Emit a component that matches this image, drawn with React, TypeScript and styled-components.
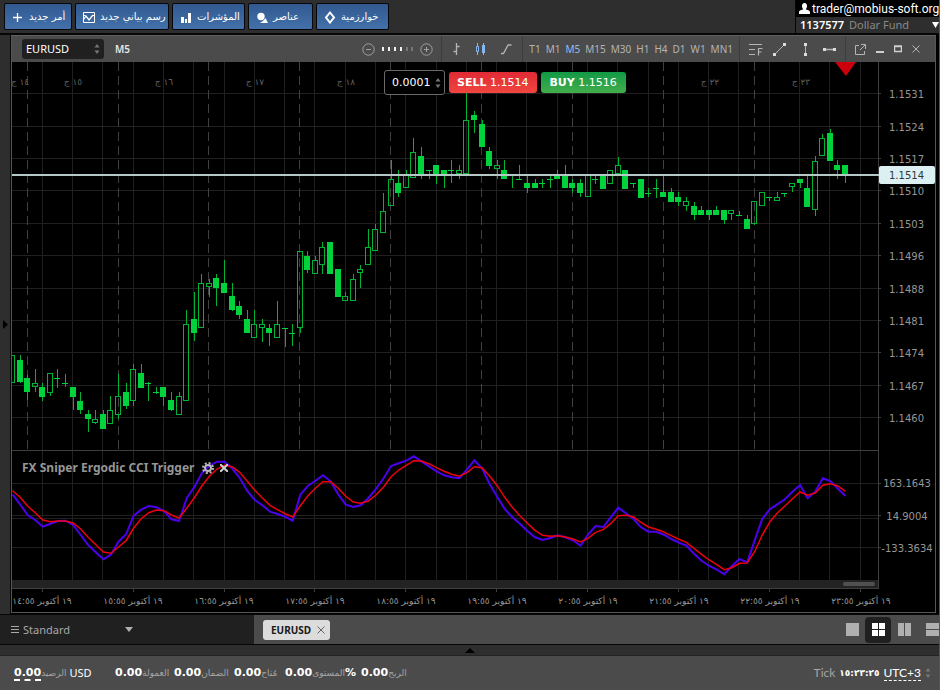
import React from "react";
import styled, { createGlobalStyle, css } from "styled-components";

const GlobalStyle = createGlobalStyle`
  *, *::before, *::after { box-sizing: border-box; }
  html, body, #root { height: 100%; }
  body {
    margin: 0;
    background: #2e2e2e;
    color: #fff;
    font: 11px/16px "Noto Sans", "DejaVu Sans", sans-serif;
    overflow: hidden;
  }
  button, input, select { font: inherit; color: inherit; margin: 0; }
  button { cursor: pointer; padding: 0; border: 0; background: none; }
`;

const Page = styled.div`
  display: flex;
  flex-direction: column;
  height: 100%;
  border-right: 1px solid #2a5f86;
`;

const Header = styled.header`
  display: flex;
  justify-content: space-between;
  height: 35px;
  flex: none;
  background: #2e2e2e;
  border-bottom: 2px solid #060606;
`;

const Commands = styled.nav`
  display: flex;
  gap: 3px;
  padding: 3px 0 0 4px;
`;

const CommandButton = styled.button<{ $width: number }>`
  display: flex;
  align-items: center;
  justify-content: flex-start;
  gap: 4px;
  width: ${(p) => p.$width}px;
  height: 27px;
  padding: 0 6px;
  border: 1px solid #05070a;
  border-radius: 2px;
  background: linear-gradient(#30598f, #4471ab);
  color: #fff;
  font: 10px/16px "DejaVu Sans", sans-serif;
  white-space: nowrap;
  svg { flex: none; }
`;

const Account = styled.section`
  width: 144px;
  border-left: 1px solid #060606;
`;

const AccountUser = styled.div`
  display: flex;
  align-items: center;
  gap: 2px;
  height: 17px;
  padding-left: 3px;
  background: #000;
  font: 12px/16px Roboto, sans-serif;
  white-space: nowrap;
  svg { flex: none; }
`;

const AccountNumber = styled.div`
  display: flex;
  align-items: center;
  gap: 5px;
  height: 15px;
  padding-left: 4px;
  color: #8a8a8a;
  b { color: #fff; font-weight: 600; }
  svg { margin-left: auto; }
`;

const Workspace = styled.main`
  display: flex;
  flex: 1;
  min-height: 0;
  background: #000;
`;

const SideHandle = styled.button`
  width: 11px;
  flex: none;
  background: #2e2e2e;
  border-right: 1px solid #060606;
  display: flex;
  align-items: center;
  justify-content: flex-start;
  padding-left: 3px;
`;

const ChartWindow = styled.section`
  display: flex;
  flex-direction: column;
  flex: 1;
  min-width: 0;
  border: 1px solid #565656;
  border-top-color: #606060;
  margin: 0 3px 1px 0;
`;

const ChartToolbar = styled.div`
  display: flex;
  align-items: center;
  height: 26px;
  flex: none;
  padding-left: 10px;
  background: #4b4b4b;
  color: #b4b4b4;
`;

const Spinner = styled.span`
  display: inline-flex;
  pointer-events: none;
`;

const SymbolField = styled.label`
  display: flex;
  align-items: center;
  width: 82px;
  height: 20px;
  padding: 0 4px;
  border-radius: 3px;
  background: #202020;
  color: #fff;
`;

const SymbolSelect = styled.select`
  appearance: none;
  flex: 1;
  min-width: 0;
  border: 0;
  padding: 0;
  background: transparent;
  color: #fff;
  outline: 0;
`;

const ActivePeriod = styled.span`
  margin-left: 11px;
  color: #e6e6e6;
  font-size: 10px;
  font-weight: 600;
`;

const ToolGroup = styled.div<{ $gap: number; $pad: number; $end?: number; $push?: boolean }>`
  display: flex;
  align-items: center;
  height: 26px;
  gap: ${(p) => p.$gap}px;
  padding: 0 ${(p) => p.$end ?? p.$pad}px 0 ${(p) => p.$pad}px;
  ${(p) => p.$push && css`margin-left: auto;`}
  & + & { border-left: 1px solid #3c3c3c; }
`;

const IconButton = styled.button`
  display: inline-flex;
  align-items: center;
  justify-content: center;
  color: inherit;
`;

const PeriodButton = styled.button<{ $active?: boolean }>`
  font-size: 10px;
  color: ${(p) => (p.$active ? "#8fbdf2" : "#b4b4b4")};
`;

const ChartBody = styled.div`
  position: relative;
  flex: 1;
  min-height: 0;
  background: #000;
`;

const ChartSvg = styled.svg`
  display: block;
  width: 100%;
  height: 100%;
  font-family: "DejaVu Sans", sans-serif;
`;

const ChartOverlay = styled.div`
  position: absolute;
  inset: 0;
  display: grid;
  grid-template-rows: 388fr 162fr;
`;

const TradePanel = styled.div`
  display: flex;
  align-items: center;
  align-self: start;
  gap: 4px;
  margin-left: 372px;
  padding-top: 8px;
  font: 11px/16px "DejaVu Sans", sans-serif;
`;

const VolumeField = styled.label`
  display: flex;
  align-items: center;
  width: 61px;
  height: 25px;
  padding: 0 3px 0 7px;
  border: 1px solid #6a6a6a;
  border-radius: 3px;
  background: #000;
`;

const VolumeInput = styled.input`
  flex: 1;
  width: 40px;
  min-width: 0;
  padding: 0;
  border: 0;
  outline: 0;
  background: transparent;
`;

const TradeButton = styled.button<{ $side: "sell" | "buy" }>`
  height: 21px;
  padding: 0 9px 0 8px;
  border-radius: 3px;
  white-space: nowrap;
  background: ${(p) =>
    p.$side === "sell" ? "linear-gradient(#e02a35, #f04540)" : "linear-gradient(#129a45, #42ad4c)"};
`;

const IndicatorTitle = styled.div`
  display: flex;
  align-items: center;
  align-self: start;
  gap: 6px;
  padding: 10px 0 0 10px;
  color: #969696;
  font: bold 12px/16px "Noto Sans", sans-serif;
  span { margin-right: 2px; }
`;

const TabBar = styled.footer`
  display: flex;
  align-items: stretch;
  height: 31px;
  flex: none;
  background: #4b4b4b;
  border-top: 1px solid #060606;
  border-bottom: 1px solid #060606;
`;

const LayoutPicker = styled.button`
  display: flex;
  align-items: center;
  gap: 4px;
  width: 254px;
  padding: 0 0 0 11px;
  background: #202020;
  color: #a8a8a8;
  text-align: left;
  span { width: 98px; }
`;

const ChartTab = styled.div`
  display: flex;
  align-items: center;
  align-self: center;
  gap: 6px;
  height: 20px;
  margin-left: 9px;
  padding: 0 5px 0 8px;
  border-radius: 3px;
  background: #dcdcdc;
  color: #181818;
  font-size: 10px;
  font-weight: 700;
`;

const TileButtons = styled.div`
  display: flex;
  align-items: center;
  margin-left: auto;
`;

const TileButton = styled.button<{ $active?: boolean }>`
  display: flex;
  align-items: center;
  justify-content: center;
  width: 26px;
  height: 26px;
  border-radius: 4px;
  color: ${(p) => (p.$active ? "#fff" : "#b0b0b0")};
  background: ${(p) => (p.$active ? "#202020" : "transparent")};
  &:last-child { width: 22px; justify-content: flex-end; }
`;

const Drawer = styled.button`
  display: flex;
  align-items: center;
  justify-content: center;
  height: 10px;
  flex: none;
  background: #2e2e2e;
`;

const StatusBar = styled.footer`
  display: flex;
  align-items: center;
  height: 35px;
  flex: none;
  padding: 0 8px 0 14px;
  border-top: 1px solid #222;
  background: #4b4b4b;
  white-space: nowrap;
`;

const Metric = styled.div<{ $width: number }>`
  display: flex;
  align-items: center;
  width: ${(p) => p.$width}px;
  b { font: bold 11px/16px "DejaVu Sans", sans-serif; }
  bdi { color: #a5a5a5; font: 9px/16px "DejaVu Sans", sans-serif; }
`;

const Dashed = styled.span`
  border-bottom: 2px dashed #fff;
  line-height: 12px;
  b { line-height: 12px; }
`;

const Currency = styled.span`
  margin-left: 3px;
`;

const Clock = styled.div`
  display: flex;
  align-items: center;
  gap: 4px;
  margin-left: auto;
  color: #a5a5a5;
  font: 12px/14px Lato, sans-serif;
  b { color: #fff; font: bold 9px/14px "DejaVu Sans", sans-serif; }
`;

const ZoneButton = styled.button`
  border-bottom: 1px dashed #fff;
  color: #fff;
`;

/* ---------- icons ---------- */

const UpDown = () => (
  <Spinner aria-hidden="true">
    <svg width="6" height="12" viewBox="0 0 6 12" fill="#777">
      <path d="M3 1l2.500 3.500h-5zM3 11L.5 7.500h5z" />
    </svg>
  </Spinner>
);

const commandIcons: Record<string, React.ReactNode> = {
  plus: <path d="M6.500 3v9M2 7.500h9" stroke="#fff" strokeWidth="1.300" />,
  chart: (
    <g fill="none" stroke="#fff">
      <path d="M1.500 2.500h11v10h-11zM1.500 5.500h2M10.500 5.500h2" strokeWidth="1" />
      <path d="M2 9l2-3 3 4 4-5" strokeWidth="1.300" />
    </g>
  ),
  bars: <path d="M2 7h3v6H2zM6 9h2v4H6zM9 3h3v10H9z" fill="#fff" />,
  shapes: (
    <g fill="#fff">
      <circle cx="6" cy="6.500" r="3.700" />
      <path d="M5 13h8l-2.500-5L8 11z" />
    </g>
  ),
  diamond: <path d="M7 2.500l4 5L7 12.500 3 7.500z" fill="none" stroke="#fff" strokeWidth="2" />,
};

const Minus = () => (
  <svg width="13" height="13" viewBox="0 0 13 13" fill="none" stroke="#a0a0a0">
    <circle cx="6.500" cy="6.500" r="5.700" />
    <path d="M4 6.500h5" />
  </svg>
);
const Plus = () => (
  <svg width="13" height="13" viewBox="0 0 13 13" fill="none" stroke="#a0a0a0">
    <circle cx="6.500" cy="6.500" r="5.700" />
    <path d="M4 6.500h5M6.500 4v5" />
  </svg>
);
const ScaleDots = () => (
  <svg width="31" height="4" viewBox="0 0 31 4" fill="#f0f0f0">
    {[0, 6, 12, 18].map((x) => (
      <rect key={x} x={x} width="2" height="4" />
    ))}
    <rect x="24" width="2" height="4" fill="#777" />
    <rect x="29" width="2" height="4" fill="#777" />
  </svg>
);

const toolIcon = (label: string, w: number, h: number, node: React.ReactNode) => (
  <IconButton key={label} aria-label={label}>
    <svg width={w} height={h} viewBox={`0 0 ${w} ${h}`} fill="none" stroke="currentColor">
      {node}
    </svg>
  </IconButton>
);

const chartTypes = [
  toolIcon("Bars", 9, 14, <path d="M4.500 1v12M4.500 4.500h3M1.500 9.500h3" strokeWidth="1.300" />),
  toolIcon(
    "Candles",
    11,
    14,
    <g stroke="#86b8f2" fill="none">
      <path d="M2.500 1v3M2.500 10v3M8.500 1v12" />
      <path d="M1.500 4.500h2v5h-2z" />
      <path d="M7 3h3v8H7z" fill="#86b8f2" stroke="none" />
    </g>
  ),
  toolIcon("Line", 12, 14, <path d="M1 11.500h2.500L8 3h3.500" strokeWidth="1.400" strokeLinejoin="round" />),
];

const drawingTools = [
  toolIcon(
    "Fibonacci",
    14,
    13,
    <path d="M0 1.500h13M0 6.500h6M0 11.500h6M9.500 12.500v-7h4M9.500 9h3" strokeWidth="1.200" />
  ),
  toolIcon(
    "Trend line",
    13,
    13,
    <g>
      <path d="M2 11l9-9" />
      <path d="M0 10h3v3H0zM10 0h3v3h-3z" fill="#dcdcdc" stroke="none" />
    </g>
  ),
  toolIcon(
    "Vertical line",
    17,
    13,
    <g>
      <path d="M9.500 1v11" />
      <path d="M8 0h3v3H8zM8 10h3v3H8z" fill="#dcdcdc" stroke="none" />
    </g>
  ),
  toolIcon(
    "Horizontal line",
    13,
    5,
    <g>
      <path d="M1 2.500h11" strokeWidth="1.500" />
      <path d="M0 1h3v3H0zM10 1h3v3h-3z" fill="#dcdcdc" stroke="none" />
    </g>
  ),
];

const windowTools = [
  toolIcon("Detach", 11, 11, <path d="M4 1.500H.5v9h9V7M6 .5h4.500V5M10 1L5 6" />),
  toolIcon("Minimize", 8, 12, <path d="M0 9h8" strokeWidth="2" stroke="#d0d0d0" />),
  toolIcon("Maximize", 8, 8, <path d="M.5 1.500h7v5h-7zM0 1h8" stroke="#d0d0d0" strokeWidth="1.500" />),
  toolIcon("Close", 8, 8, <path d="M.5.5l7 7M7.500.5l-7 7" />),
];

/* ---------- chart data: [high, bodyTop, bodyBottom, low, filled] ---------- */

type Candle = [number, number, number, number, 0 | 1];

const CANDLES: Candle[] = [
  [355, 355, 383, 383, 0], [355, 360, 382, 383, 1], [375, 378, 392, 400, 1], [369, 383, 387, 392, 0],
  [383, 387, 397, 401, 1], [373, 373, 393, 396, 0], [369, 378, 379, 388, 1], [374, 383, 384, 387, 1],
  [387, 387, 397, 410, 1], [392, 401, 410, 414, 1], [410, 414, 419, 432, 1], [410, 419, 423, 424, 0],
  [410, 414, 429, 429, 1], [396, 410, 424, 424, 0], [374, 396, 415, 419, 0], [383, 392, 406, 409, 1],
  [364, 369, 401, 406, 0], [364, 373, 388, 388, 1], [382, 383, 384, 401, 1], [387, 392, 393, 394, 1],
  [387, 387, 397, 406, 1], [392, 400, 410, 411, 1], [392, 396, 415, 415, 0], [310, 324, 401, 401, 0],
  [292, 319, 333, 341, 1], [274, 283, 328, 328, 0], [279, 283, 287, 297, 0], [274, 278, 288, 306, 1],
  [260, 283, 293, 293, 1], [283, 296, 310, 311, 1], [301, 306, 315, 319, 1], [310, 319, 333, 333, 1],
  [310, 324, 338, 338, 0], [319, 324, 328, 342, 0], [324, 328, 333, 346, 1], [301, 324, 338, 338, 0],
  [328, 328, 329, 347, 1], [324, 333, 334, 346, 1], [251, 251, 328, 333, 0], [251, 256, 270, 273, 1],
  [256, 260, 274, 274, 0], [242, 247, 265, 274, 0], [242, 242, 274, 274, 1], [269, 269, 297, 297, 1],
  [292, 296, 301, 301, 0], [274, 279, 301, 301, 0], [265, 269, 273, 288, 0], [229, 247, 265, 265, 0],
  [224, 229, 251, 251, 0], [193, 211, 233, 233, 0], [160, 179, 206, 206, 0], [170, 183, 193, 197, 1],
  [170, 175, 188, 188, 0], [138, 152, 178, 178, 0], [147, 156, 174, 179, 1], [170, 170, 171, 179, 1],
  [165, 165, 174, 184, 1], [170, 170, 174, 188, 1], [160, 170, 171, 183, 1], [165, 170, 174, 179, 0],
  [92, 120, 174, 174, 0], [111, 115, 120, 133, 1], [120, 124, 147, 147, 1], [147, 151, 166, 169, 1],
  [160, 165, 169, 179, 0], [160, 170, 179, 179, 1], [174, 174, 175, 188, 1], [165, 179, 180, 180, 1],
  [175, 183, 188, 193, 1], [179, 183, 188, 188, 1], [179, 183, 184, 188, 1], [175, 179, 180, 188, 1],
  [170, 175, 179, 179, 1], [165, 175, 188, 188, 1], [179, 183, 188, 193, 1], [179, 183, 193, 197, 1],
  [175, 175, 197, 197, 0], [175, 179, 180, 184, 1], [174, 174, 189, 189, 1], [170, 170, 184, 184, 0],
  [157, 165, 174, 174, 0], [170, 170, 189, 189, 1], [183, 183, 184, 188, 1], [179, 179, 198, 198, 1],
  [188, 193, 194, 197, 1], [179, 188, 189, 198, 1], [174, 192, 197, 197, 1], [188, 192, 202, 202, 1],
  [192, 197, 202, 206, 1], [197, 201, 206, 211, 0], [202, 206, 215, 220, 1], [206, 210, 215, 215, 1],
  [210, 210, 215, 220, 1], [206, 210, 215, 215, 1], [210, 210, 220, 224, 1], [210, 210, 214, 220, 0],
  [211, 215, 216, 216, 1], [215, 219, 229, 229, 1], [201, 201, 224, 225, 0], [192, 192, 206, 206, 0],
  [197, 197, 198, 201, 1], [192, 197, 201, 201, 0], [193, 193, 194, 197, 1], [183, 183, 187, 192, 0],
  [179, 179, 183, 188, 1], [175, 188, 207, 207, 1], [156, 161, 210, 216, 0], [134, 138, 156, 156, 0],
  [129, 133, 161, 161, 1], [160, 165, 170, 179, 1], [165, 165, 174, 183, 1],
];

const CCI = [
  148, 178, 210, 225, 245, 236, 228, 227, 240, 270, 300, 322, 343, 329, 290, 268, 212, 194, 183, 187, 198, 223,
  228, 160, 127, 85, 62, 50, 50, 70, 99, 138, 165, 181, 200, 207, 215, 227, 149, 123, 107, 91, 109, 148, 179, 186,
  181, 159, 132, 100, 63, 55, 47, 34, 49, 64, 79, 91, 97, 100, 74, 46, 70, 117, 155, 192, 217, 236, 258, 277, 285,
  279, 271, 277, 286, 302, 269, 243, 246, 217, 188, 205, 222, 247, 260, 260, 269, 282, 293, 302, 326, 347, 363,
  374, 388, 363, 342, 352, 287, 222, 193, 178, 163, 140, 120, 160, 140, 100, 108, 131, 153,
];

const TRIGGER = [
  137, 157, 183, 203, 225, 230, 228, 228, 234, 252, 277, 299, 321, 325, 306, 287, 249, 221, 203, 195, 197, 210,
  219, 190, 159, 123, 94, 72, 61, 65, 82, 109, 136, 159, 181, 194, 206, 216, 182, 153, 130, 110, 110, 129, 154, 171,
  175, 168, 150, 126, 95, 75, 61, 47, 48, 56, 68, 79, 88, 94, 83, 65, 68, 93, 122, 157, 187, 212, 235, 256, 271,
  274, 272, 276, 282, 291, 280, 262, 254, 236, 212, 211, 216, 232, 246, 253, 261, 272, 283, 292, 310, 328, 345,
  359, 374, 368, 355, 354, 320, 270, 231, 204, 183, 161, 141, 151, 144, 121, 116, 123, 139,
];

const STEP = 833 / 110;
const xOf = (i: number) => 12 + i * STEP;
const crisp = (v: number) => Math.floor(v) + 0.5;
const linePoints = (values: number[]) =>
  values.map((v, i) => `${(xOf(i) + 0.5).toFixed(1)},${(445 + v / 3).toFixed(1)}`).join(" ");

const GRID_X = Array.from({ length: 28 }, (_, k) => crisp(xOf(4 + 4 * k)));
const DAY_X = Array.from({ length: 9 }, (_, k) => crisp(xOf(2 + 12 * k)));
const TICK_X = Array.from({ length: 10 }, (_, k) => crisp(xOf(4 + 12 * k)));
const PRICES = ["1.1531", "1.1524", "1.1517", "1.1510", "1.1503", "1.1496", "1.1488", "1.1481", "1.1474", "1.1467", "1.1460"];
const priceY = (i: number) => crisp(93.6 + i * 32.4);
const HOURS = ["١٤", "١٥", "١٦", "١٧", "١٨", "١٩", "٢٠", "٢١", "٢٢", "٢٣"];
const DAYS: [string, number][] = [["١٤", 20], ["١٥", 73], ["١٦", 164], ["١٧", 255], ["١٨", 346], ["٢٢", 710], ["٢٣", 801]];
const CCI_LEVELS: [string, number][] = [["163.1643", 483], ["14.9004", 516], ["-133.3634", 548]];

const Chart = () => (
  <ChartSvg viewBox="12 62 923 550" preserveAspectRatio="xMinYMin meet" role="img" aria-label="EURUSD M5">
    <g stroke="#202020">
      {GRID_X.map((x) => (
        <path key={x} d={`M${x} 62V580`} />
      ))}
      {PRICES.map((p, i) => (
        <path key={p} d={`M12 ${priceY(i)}H878`} />
      ))}
      <path d="M12 483.500H878M12 515.500H878M12 518.500H878M12 547.500H878" />
    </g>
    <g stroke="#404040" strokeDasharray="9 5">
      {DAY_X.map((x) => (
        <path key={x} d={`M${x} 62V450`} />
      ))}
    </g>
    <rect x="12" y="580" width="866" height="9" fill="#232323" />
    <rect x="843" y="582" width="32" height="4" rx="2" fill="#505050" />
    <g stroke="#3e3e3e" fill="none">
      <path d="M12 450.500H878M12 588.500H878M878.500 62V589" />
      {TICK_X.map((x) => (
        <path key={x} d={`M${x} 589v3`} />
      ))}
      {PRICES.map((p, i) => (
        <path key={p} d={`M879 ${priceY(i)}h2`} />
      ))}
      <path d="M879 483.500h2M879 515.500h2M879 547.500h2" />
    </g>
    <g fill="#606060" fontSize="9" direction="rtl" textAnchor="middle">
      {DAYS.map(([day, x]) => (
        <text key={day} x={x} y="85">{`${day} ج`}</text>
      ))}
    </g>
    <g stroke="#00b432">
      {CANDLES.map(([high, top, bottom, low, filled], i) => {
        const left = Math.round(xOf(i)) - 3;
        const mid = left + 3.5;
        return (
          <g key={i}>
            {high < top && <path d={`M${mid} ${high}V${top}`} />}
            {low > bottom && <path d={`M${mid} ${bottom}V${low}`} />}
            {filled ? (
              <rect x={left} y={top} width="6" height={Math.max(1, bottom - top)} fill="#00d23c" stroke="none" />
            ) : (
              <rect x={left + 0.5} y={top + 0.5} width="5" height={bottom - top - 1} fill="none" />
            )}
          </g>
        );
      })}
    </g>
    <rect x="12" y="174" width="867" height="2" fill="#b4c8c6" />
    <polyline points={linePoints(CCI)} fill="none" stroke="#4a00ee" strokeWidth="2" />
    <polyline points={linePoints(TRIGGER)} fill="none" stroke="#ee0010" strokeWidth="1.500" />
    <path d="M835 62h21l-10 14z" fill="#cc000c" />
    <g fill="#969696" fontSize="10">
      {PRICES.map((p, i) => (
        <text key={p} x="889" y={priceY(i) + 4.5}>{p}</text>
      ))}
      {CCI_LEVELS.map(([label, y]) => (
        <text key={label} x="907" y={y + 4} textAnchor="middle">{label}</text>
      ))}
    </g>
    <rect x="879" y="166" width="56" height="18" rx="2" fill="#dceff2" />
    <text x="889" y="179" fontSize="10" fill="#30383a">1.1514</text>
    <g fill="#969696" fontSize="9" direction="rtl" textAnchor="middle">
      {HOURS.map((h, i) => (
        <text key={h} x={42 + 91 * i} y="604">{`١٩ أكتوبر ${h}:٥٥`}</text>
      ))}
    </g>
  </ChartSvg>
);

/* ---------- page ---------- */

const COMMANDS: { icon: string; label: string; width: number }[] = [
  { icon: "plus", label: "أمر جديد", width: 68 },
  { icon: "chart", label: "رسم بياني جديد", width: 94 },
  { icon: "bars", label: "المؤشرات", width: 73 },
  { icon: "shapes", label: "عناصر", width: 65 },
  { icon: "diamond", label: "خوارزمية", width: 73 },
];

const PERIODS = ["T1", "M1", "M5", "M15", "M30", "H1", "H4", "D1", "W1", "MN1"];

const METRICS: { label: string; width: number; suffix?: string }[] = [
  { label: "العمولة", width: 59 },
  { label: "الضمان", width: 60 },
  { label: "مُتاح", width: 51 },
  { label: "المستوى", width: 76, suffix: "%" },
  { label: "الربح", width: 50 },
];

const TILES: [string, string][] = [
  ["Single", "M0 0h13v13H0z"],
  ["Grid", "M0 0h6v6H0zM7 0h6v6H7zM0 7h6v6H0zM7 7h6v6H7z"],
  ["Columns", "M0 0h6v13H0zM7 0h6v13H7z"],
  ["Rows", "M0 0h13v6H0zM0 7h13v6H0z"],
];

export default function App() {
  return (
    <Page>
      <GlobalStyle />
      <Header>
        <Commands>
          {COMMANDS.map((c) => (
            <CommandButton key={c.icon} $width={c.width}>
              <svg width="14" height="14" viewBox="0 0 14 14">{commandIcons[c.icon]}</svg>
              <bdi>{c.label}</bdi>
            </CommandButton>
          ))}
        </Commands>
        <Account>
          <AccountUser>
            <svg width="11" height="11" viewBox="0 0 11 11" fill="#fff">
              <path d="M5.500 0C7.500 0 8 1.500 8 3c0 1.500-.7 2.800-1.300 3.300C8 7 11 7.500 11 9v2H0V9c0-1.500 3-2 4.300-2.700C3.700 5.800 3 4.500 3 3c0-1.500.5-3 2.500-3z" />
            </svg>
            trader@mobius-soft.org
          </AccountUser>
          <AccountNumber>
            <b>1137577</b>
            <span>Dollar Fund</span>
            <svg width="7" height="6" viewBox="0 0 7 6" fill="#fff"><path d="M0 0h7L3.500 6z" /></svg>
          </AccountNumber>
        </Account>
      </Header>

      <Workspace>
        <SideHandle aria-label="Open side panel">
          <svg width="5" height="9" viewBox="0 0 5 9"><path d="M0 0l5 4.500L0 9z" /></svg>
        </SideHandle>
        <ChartWindow>
          <ChartToolbar>
            <SymbolField>
              <SymbolSelect aria-label="Symbol" defaultValue="EURUSD">
                <option>EURUSD</option>
              </SymbolSelect>
              <UpDown />
            </SymbolField>
            <ActivePeriod>M5</ActivePeriod>
            <ToolGroup $gap={7} $pad={8} $push>
              <IconButton aria-label="Zoom out"><Minus /></IconButton>
              <ScaleDots />
              <IconButton aria-label="Zoom in"><Plus /></IconButton>
            </ToolGroup>
            <ToolGroup $gap={14} $pad={10}>{chartTypes}</ToolGroup>
            <ToolGroup $gap={5} $pad={6}>
              {PERIODS.map((p) => (
                <PeriodButton key={p} $active={p === "M5"}>{p}</PeriodButton>
              ))}
            </ToolGroup>
            <ToolGroup $gap={10} $pad={9}>{drawingTools}</ToolGroup>
            <ToolGroup $gap={10} $pad={9} $end={15}>{windowTools}</ToolGroup>
          </ChartToolbar>
          <ChartBody>
            <Chart />
            <ChartOverlay>
              <TradePanel>
                <VolumeField>
                  <VolumeInput aria-label="Volume" defaultValue="0.0001" />
                  <UpDown />
                </VolumeField>
                <TradeButton $side="sell"><b>SELL</b> 1.1514</TradeButton>
                <TradeButton $side="buy"><b>BUY</b> 1.1516</TradeButton>
              </TradePanel>
              <IndicatorTitle>
                <span>FX Sniper Ergodic CCI Trigger</span>
                <IconButton aria-label="Indicator settings">
                  <svg width="12" height="12" viewBox="0 0 12 12" fill="none" stroke="#b8b8b8">
                    <circle cx="6" cy="6" r="3" strokeWidth="2" />
                    <circle cx="6" cy="6" r="5" strokeWidth="2" strokeDasharray="2 1.930" />
                  </svg>
                </IconButton>
                <IconButton aria-label="Remove indicator">
                  <svg width="8" height="8" viewBox="0 0 8 8" stroke="#d0d0d0" strokeWidth="2"><path d="M0 0l8 8M8 0L0 8" /></svg>
                </IconButton>
              </IndicatorTitle>
            </ChartOverlay>
          </ChartBody>
        </ChartWindow>
      </Workspace>

      <TabBar>
        <LayoutPicker>
          <svg width="8" height="9" viewBox="0 0 8 9" stroke="#a8a8a8"><path d="M0 1.500h8M0 4.500h8M0 7.500h8" /></svg>
          <span>Standard</span>
          <svg width="8" height="5" viewBox="0 0 8 5" fill="#b0b0b0"><path d="M0 0h8L4 5z" /></svg>
        </LayoutPicker>
        <ChartTab>
          EURUSD
          <IconButton aria-label="Close EURUSD">
            <svg width="8" height="8" viewBox="0 0 8 8" stroke="#666"><path d="M.5.5l7 7M7.500.5l-7 7" /></svg>
          </IconButton>
        </ChartTab>
        <TileButtons>
          {TILES.map(([name, d]) => (
            <TileButton key={name} aria-label={name} $active={name === "Grid"}>
              <svg width="13" height="13" viewBox="0 0 13 13" fill="currentColor"><path d={d} /></svg>
            </TileButton>
          ))}
        </TileButtons>
      </TabBar>

      <Drawer aria-label="Open bottom panel">
        <svg width="10" height="5" viewBox="0 0 10 5"><path d="M5 0l5 5H0z" /></svg>
      </Drawer>

      <StatusBar>
        <Metric $width={101}>
          <Dashed><b>0.00</b></Dashed>
          <bdi>الرصيد</bdi>
          <Currency>USD</Currency>
        </Metric>
        {METRICS.map((m) => (
          <Metric key={m.label} $width={m.width}>
            <b>0.00</b>
            <bdi>{m.label}</bdi>
            {m.suffix && <b>{m.suffix}</b>}
          </Metric>
        ))}
        <Clock>
          Tick
          <b>١٥:٢٣:٢٥</b>
          <ZoneButton>UTC+3</ZoneButton>
          <UpDown />
        </Clock>
      </StatusBar>
    </Page>
  );
}
